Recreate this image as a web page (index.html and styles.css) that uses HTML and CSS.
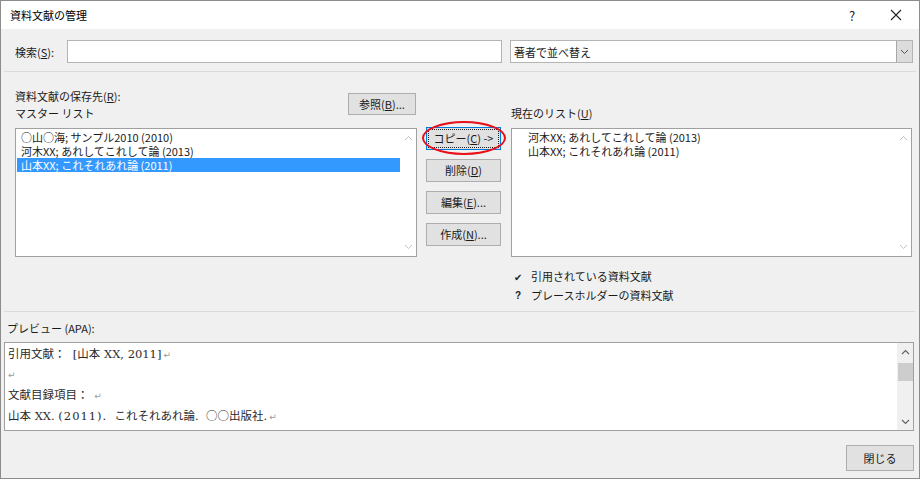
FILE: index.html
```html
<!DOCTYPE html>
<html lang="ja">
<head>
<meta charset="utf-8">
<title>資料文献の管理</title>
<link rel="stylesheet" href="styles.css">
</head>
<body>
<div class="window">
  <div class="titlebar">
    <span class="title">資料文献の管理</span>
    <span class="tb-help">?</span>
    <span class="tb-close">
      <svg width="12" height="12" viewBox="0 0 12 12"><path d="M1 1L11 11M11 1L1 11" stroke="#222" stroke-width="1.1" fill="none"/></svg>
    </span>
  </div>
  <div class="body">
    <div class="search-row">
      <label class="search-label">検索(<u>S</u>):</label>
      <div class="textbox"></div>
      <div class="combo">
        <span class="combo-text">著者で並べ替え</span>
        <span class="combo-btn">
          <svg width="9" height="6" viewBox="0 0 9 6"><path d="M1 1L4.5 4.5L8 1" stroke="#555" stroke-width="1" fill="none"/></svg>
        </span>
      </div>
    </div>
    <div class="sep sep1"></div>
    <div class="main">
      <div class="col-left">
        <div class="col-head">
          <div class="labels">
            <div class="lbl">資料文献の保存先(<u>R</u>):</div>
            <div class="lbl">マスター リスト</div>
          </div>
          <button class="btn btn-browse">参照(<u>B</u>)...</button>
        </div>
        <div class="listbox">
          <div class="items">
            <div class="item">○山○海; サンプル2010 (2010)</div>
            <div class="item">河木XX; あれしてこれして論 (2013)</div>
            <div class="item selected">山本XX; これそれあれ論 (2011)</div>
          </div>
          <div class="vscroll disabled">
            <svg width="9" height="6" viewBox="0 0 9 6"><path d="M1 5L4.5 1.5L8 5" stroke="#c4c4c4" stroke-width="1" fill="none"/></svg>
            <svg width="9" height="6" viewBox="0 0 9 6"><path d="M1 1L4.5 4.5L8 1" stroke="#c4c4c4" stroke-width="1" fill="none"/></svg>
          </div>
        </div>
      </div>
      <div class="col-buttons">
        <div class="copy-wrap">
          <button class="btn btn-copy"><span class="focus">コピー(<u>C</u>) -&gt;</span></button>
          <span class="red-ring"></span>
        </div>
        <button class="btn">削除(<u>D</u>)</button>
        <button class="btn">編集(<u>E</u>)...</button>
        <button class="btn">作成(<u>N</u>)...</button>
      </div>
      <div class="col-right">
        <div class="col-head right-head">
          <div class="lbl">現在のリスト(<u>U</u>)</div>
        </div>
        <div class="listbox">
          <div class="items indent">
            <div class="item">河木XX; あれしてこれして論 (2013)</div>
            <div class="item">山本XX; これそれあれ論 (2011)</div>
          </div>
          <div class="vscroll disabled">
            <svg width="9" height="6" viewBox="0 0 9 6"><path d="M1 5L4.5 1.5L8 5" stroke="#c4c4c4" stroke-width="1" fill="none"/></svg>
            <svg width="9" height="6" viewBox="0 0 9 6"><path d="M1 1L4.5 4.5L8 1" stroke="#c4c4c4" stroke-width="1" fill="none"/></svg>
          </div>
        </div>
        <div class="legend">
          <div class="legend-row"><span class="mark">✔</span><span>引用されている資料文献</span></div>
          <div class="legend-row"><span class="mark q">?</span><span>プレースホルダーの資料文献</span></div>
        </div>
      </div>
    </div>
    <div class="sep sep2"></div>
    <div class="preview-label">プレビュー (APA):</div>
    <div class="preview">
      <div class="preview-text">
        <div class="pline"><span class="cjk">引用文献：</span>&nbsp;&nbsp;[<span class="cjk">山本</span> XX, 2011]<span class="pm">↵</span></div>
        <div class="pline"><span class="pm first">↵</span></div>
        <div class="pline"><span class="cjk">文献目録項目：</span>&nbsp;<span class="pm">↵</span></div>
        <div class="pline"><span class="cjk">山本</span> XX. <span class="ls1">(2011).</span>&nbsp; <span class="cjk">これそれあれ論</span>.&nbsp;&nbsp;<span class="cjk">○○出版社</span>.<span class="pm">↵</span></div>
      </div>
      <div class="vscroll active">
        <svg width="9" height="6" viewBox="0 0 9 6"><path d="M1 5L4.5 1.5L8 5" stroke="#606060" stroke-width="1.1" fill="none"/></svg>
        <div class="thumb"></div>
        <div class="track-fill"></div>
        <svg width="9" height="6" viewBox="0 0 9 6"><path d="M1 1L4.5 4.5L8 1" stroke="#606060" stroke-width="1.1" fill="none"/></svg>
      </div>
    </div>
    <div class="footer">
      <button class="btn btn-close">閉じる</button>
    </div>
  </div>
</div>
</body>
</html>
```

FILE: styles.css
```css
* { box-sizing: border-box; }
html, body { margin: 0; padding: 0; background: #f0f0f0; }
body {
  font-family: "Noto Sans CJK JP", "Noto Sans", sans-serif;
  font-size: 11px;
  color: #1a1a1a;
}
u { text-decoration: underline; text-underline-offset: 1px; }

.window {
  width: 920px;
  height: 479px;
  border: 1px solid #8c8c8c;
  background: #f0f0f0;
  display: flex;
  flex-direction: column;
  overflow: hidden;
}

.titlebar {
  height: 28px;
  background: #ffffff;
  display: flex;
  align-items: center;
  padding-left: 9px;
  flex: none;
}
.title { flex: 1; font-size: 11px; color: #000; }
.tb-help { width: 44px; text-align: center; font-size: 13px; color: #222; }
.tb-close { width: 44px; display: flex; justify-content: center; align-items: center; margin-right: 1px; }

.body { flex: 1; display: flex; flex-direction: column; }

.search-row {
  display: flex;
  align-items: center;
  height: 23px;
  margin-top: 11px;
  padding-left: 14px;
}
.search-label { width: 52px; }
.textbox {
  width: 435px;
  height: 23px;
  background: #fff;
  border: 1px solid #b4b4b4;
}
.combo {
  margin-left: 8px;
  width: 403px;
  height: 23px;
  background: #fff;
  border: 1px solid #b4b4b4;
  display: flex;
  align-items: center;
}
.combo-text { flex: 1; padding-left: 3px; }
.combo-btn {
  width: 16px;
  height: 21px;
  background: #dcdcdc;
  border-left: 1px solid #a8a8a8;
  display: flex;
  align-items: center;
  justify-content: center;
}

.sep { height: 1px; background: #dadada; margin: 0 3px; flex: none; }
.sep1 { margin-top: 8px; }

.main {
  display: flex;
  padding-left: 14px;
}
.col-left { width: 402px; display: flex; flex-direction: column; }
.col-head {
  height: 56px;
  display: flex;
  justify-content: space-between;
  align-items: flex-start;
}
.labels { padding-top: 16px; }
.lbl { line-height: 17px; height: 17px; }
.right-head { align-items: flex-end; padding-bottom: 6px; }

.btn {
  font-family: inherit;
  font-size: 11px;
  color: #1a1a1a;
  background: #e1e1e1;
  border: 1px solid #adadad;
  padding: 0;
  height: 23px;
  width: 75px;
  display: flex;
  align-items: center;
  justify-content: center;
  line-height: 1;
}
.btn-browse { width: 68px; height: 22px; margin-top: 21px; margin-right: 1px; }

.listbox {
  height: 129px;
  background: #fff;
  border: 1px solid #a0a0a0;
  display: flex;
}
.items { flex: 1; padding: 1px 0 0 1px; }
.item { height: 14px; line-height: 14px; padding-left: 4px; white-space: nowrap; }
.item.selected { background: #3399ff; color: #fff; }
.items.indent .item { padding-left: 15px; }

.vscroll {
  width: 16px;
  display: flex;
  flex-direction: column;
  align-items: center;
  justify-content: space-between;
  padding: 6px 0 6px;
}
.vscroll.disabled { background: #fff; }

.col-buttons {
  width: 75px;
  margin-left: 9px;
  padding-top: 55px;
  display: flex;
  flex-direction: column;
  gap: 9px;
}
.copy-wrap { position: relative; height: 23px; }
.btn-copy {
  border: 1px solid #0078d7;
  padding: 1px;
  width: 75px;
  height: 23px;
}
.btn-copy .focus {
  width: 100%;
  height: 100%;
  border: 1px dotted #222;
  display: flex;
  align-items: center;
  justify-content: center;
}
.red-ring {
  position: absolute;
  left: -4px;
  top: -6px;
  width: 84px;
  height: 34px;
  border: 2px solid #e8101a;
  border-radius: 50%;
  pointer-events: none;
}

.col-right { width: 401px; margin-left: 10px; display: flex; flex-direction: column; }

.legend { margin-top: 10px; }
.legend-row { height: 19px; line-height: 19px; display: flex; }
.mark { width: 20px; padding-left: 3px; font-size: 10px; color: #222; }
.mark.q { font-weight: bold; font-family: "Liberation Sans", sans-serif; font-size: 10px; padding-left: 4px; }

.sep2 { margin-top: 6px; margin-right: 4px; }

.preview-label {
  margin-top: 8px;
  padding-left: 6px;
  line-height: 17px;
  height: 17px;
}
.preview {
  margin: 5px 0 0 3px;
  width: 910px;
  height: 89px;
  background: #fff;
  border: 1px solid #a0a0a0;
  display: flex;
}
.preview-text {
  flex: 1;
  padding-left: 3px;
  font-family: "DejaVu Serif", "Noto Sans CJK JP", serif;
  font-size: 11.5px;
  color: #2a2a2a;
}
.cjk { font-family: "Noto Sans CJK JP", sans-serif; font-size: 11.5px; }
.ls1 { letter-spacing: 1px; }
.pline { height: 20.5px; line-height: 20.5px; white-space: nowrap; }
.pm { color: #9a9a9a; font-size: 9px; margin-left: 2px; font-family: "DejaVu Sans", sans-serif; }
.pm.first { margin-left: 0; }

.vscroll.active {
  background: #f0f0f0;
  justify-content: flex-start;
  padding: 6px 0 5px;
}
.thumb {
  width: 15px;
  height: 18px;
  margin-top: 8px;
  background: #cdcdcd;
}
.track-fill { flex: 1; }

.footer {
  display: flex;
  justify-content: flex-end;
  padding-right: 5px;
  margin-top: 14px;
}
.btn-close { width: 68px; height: 26px; }
```
